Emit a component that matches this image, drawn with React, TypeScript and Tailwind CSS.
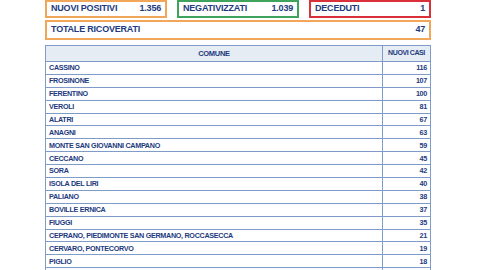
const rows: [string, string][] = [
  ["CASSINO", "116"],
  ["FROSINONE", "107"],
  ["FERENTINO", "100"],
  ["VEROLI", "81"],
  ["ALATRI", "67"],
  ["ANAGNI", "63"],
  ["MONTE SAN GIOVANNI CAMPANO", "59"],
  ["CECCANO", "45"],
  ["SORA", "42"],
  ["ISOLA DEL LIRI", "40"],
  ["PALIANO", "38"],
  ["BOVILLE ERNICA", "37"],
  ["FIUGGI", "35"],
  ["CEPRANO, PIEDIMONTE SAN GERMANO, ROCCASECCA", "21"],
  ["CERVARO, PONTECORVO", "19"],
  ["PIGLIO", "18"],
  ["", ""],
];

const StatBox = ({ label, value, border }: { label: string; value: string; border: string }) => (
  <div className={`flex h-[18px] items-center justify-between border-2 px-[4px] ${border}`}>
    <span>{label}</span>
    <span>{value}</span>
  </div>
);

export default function App() {
  return (
    <div
      className="h-[270px] w-[480px] overflow-hidden bg-white text-[#1d3a80] font-bold"
      style={{ fontFamily: '"Liberation Sans", Arial, sans-serif' }}
    >
      <div className="ml-[45px] w-[386px]">
        <div className="grid grid-cols-3 gap-[10px] text-[9px] tracking-[-0.2px]">
          <StatBox label="NUOVI POSITIVI" value="1.356" border="border-[#f2a65a]" />
          <StatBox label="NEGATIVIZZATI" value="1.039" border="border-[#3fa35b]" />
          <StatBox label="DECEDUTI" value="1" border="border-[#d9303a]" />
        </div>
        <div className="mt-[2px] flex h-[20px] items-center justify-between border-2 border-[#f2a65a] px-[4px] text-[9px] tracking-[-0.2px]">
          <span>TOTALE RICOVERATI</span>
          <span>47</span>
        </div>

        <table className="mt-[5px] w-[386px] border-collapse text-[7.2px] tracking-[-0.3px]">
          <thead>
            <tr className="h-[16px] bg-[#e6ecf4]">
              <th className="border border-[#7f9cc8] text-center text-[7.5px] font-bold">COMUNE</th>
              <th className="w-[48px] whitespace-nowrap border border-[#7f9cc8] text-center text-[7px] font-bold tracking-[-0.4px]">NUOVI CASI</th>
            </tr>
          </thead>
          <tbody>
            {rows.map(([name, n], i) => (
              <tr key={i} className="h-[12.9px]">
                <td className="border border-[#7f9cc8] px-[3px] py-0 leading-none">{name}</td>
                <td className="border border-[#7f9cc8] px-[3px] py-0 text-right leading-none">{n}</td>
              </tr>
            ))}
          </tbody>
        </table>
      </div>
    </div>
  );
}
